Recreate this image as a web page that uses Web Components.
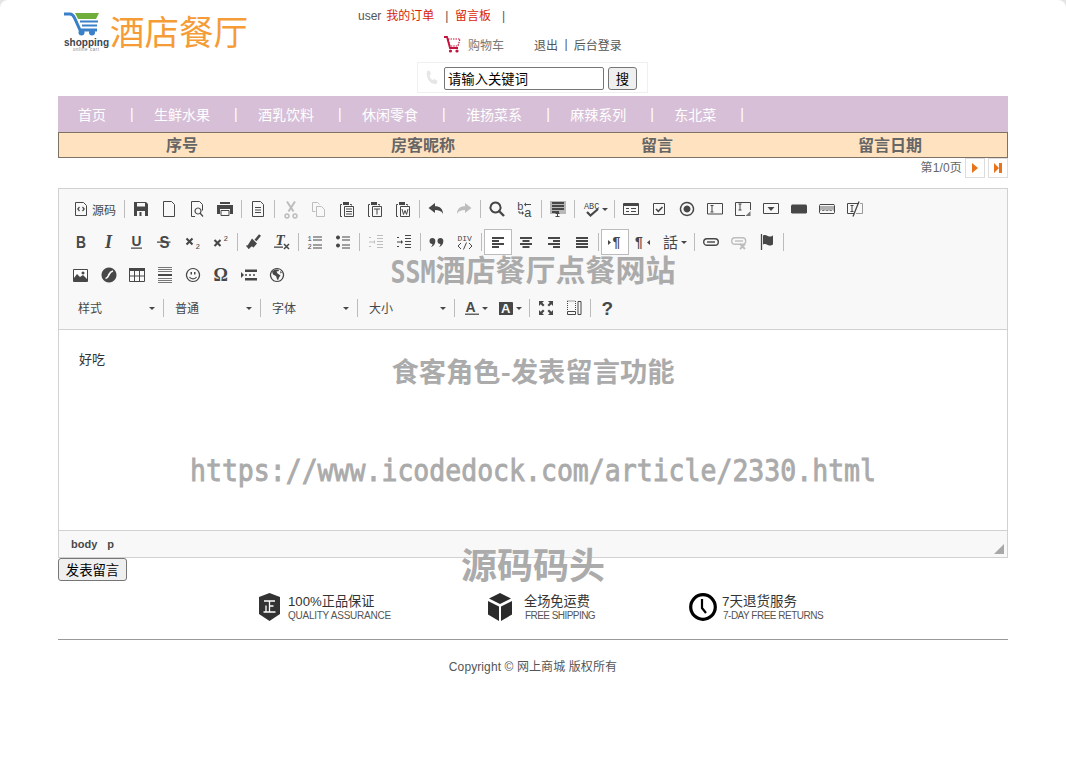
<!DOCTYPE html>
<html lang="zh">
<head>
<meta charset="utf-8">
<title>酒店餐厅</title>
<style>
    html { background: #e4e4e4; }
    body {
        margin: 0;
        height: 778px;
        overflow: hidden;
        position: relative;
        background: white;
        border-radius: 8px 8px 0 0;
        font-family: "Liberation Sans", "Noto Sans CJK SC", sans-serif;
    }
</style>
</head>
<body>
<hotel-page>
    <site-header>
        <a slot="account" class="name">user</a>
        <a slot="account" class="red">我的订单</a>
        <a slot="account" class="bar">|</a>
        <a slot="account" class="red">留言板</a>
        <a slot="account" class="bar">|</a>
    </site-header>
    <nav-bar>
        <a>首页</a><a>生鲜水果</a><a>酒乳饮料</a><a>休闲零食</a><a>淮扬菜系</a><a>麻辣系列</a><a>东北菜</a>
    </nav-bar>
    <table-head>
        <span>序号</span><span>房客昵称</span><span>留言</span><span>留言日期</span>
    </table-head>
    <page-info>第1/0页</page-info>
    <rich-editor>好吃</rich-editor>
    <submit-bar>发表留言</submit-bar>
    <site-footer>
        <trust-badge icon="shield" gap="8" width="229">100%正品保证<span slot="sub" style="letter-spacing:-.25px">QUALITY ASSURANCE</span></trust-badge>
        <trust-badge icon="cube" gap="12" width="201">全场免运费<span slot="sub" style="letter-spacing:-.55px;margin-left:1px">FREE SHIPPING</span></trust-badge>
        <trust-badge icon="clock" gap="5" width="140"><span style="font-size:13.5px">7天退货服务</span><span slot="sub" style="letter-spacing:-.5px;margin-left:1px">7-DAY FREE RETURNS</span></trust-badge>
    </site-footer>
</hotel-page>
<water-mark></water-mark>

<script>
class ShadowElement extends HTMLElement {
    constructor() {
        super();
        const template = document.createElement('template');
        template.innerHTML = `<style>${this.constructor.styles}</style>${this.constructor.markup}`;
        this.attachShadow({ mode: 'open' });
        this.shadowRoot.appendChild(template.content.cloneNode(true));
    }
}

const DARK = '#474747';
const FADED = '#bdbdbd';
const SERIF = 'font-family="Liberation Serif" font-style="italic" font-weight="bold"';
const MONO = 'font-family="Liberation Mono"';
const line = (d, color = DARK, w = 1) => `<path d="${d}" fill="none" stroke="${color}" stroke-width="${w}"/>`;
const fill = (d, color = DARK) => `<path d="${d}" fill="${color}"/>`;
const glyph = (ch, x, y, size, attrs = 'font-weight="bold"', color = DARK) =>
    `<text ${attrs} x="${x}" y="${y}" font-size="${size}" font-family="Liberation Sans" fill="${color}">${ch}</text>`;
const pageOutline = line('M2.5 .5h8l3 3v12h-11z');
const clipboard = line('M3 3.5H1.5v12H3M11 3.5h1.5v1') + fill('M4 1h6v3H4z') + line('M5.5 5.5h9v10h-9z');

const ICONS = {
    source: line('M2.5 1.5h8l3 3v10h-11z') + line('M6.5 6L4.8 8l1.7 2M9.5 6l1.7 2-1.7 2', DARK, 1.2),
    save: fill('M1 1h12l2 2v12H1z') + fill('M4 2h8v3.5H4z', '#f8f8f8') + fill('M4 10h8v5H4z', '#f8f8f8') + fill('M6.5 11h2v4h-2z'),
    newpage: pageOutline,
    preview: line('M2.5 .5h8l3 3v6M6 15.5H2.5v-15') + line('M9 7a3 3 0 1 0 .01 0zM11 12l3 3.5', DARK, 1.2),
    print: fill('M3 1h10v2H3z') + fill('M0 4h16v9h-3V8H3v5H0z') + line('M4 9.5h8v5H4z'),
    templates: pageOutline + line('M5 6.5h6M5 9h6M5 11.5h6'),
    cut: line('M4 .5l6.5 10M12 .5l-6.5 10', FADED, 2) + line('M4 13a2 2 0 1 0 .01 0zM12 13a2 2 0 1 0 .01 0z', FADED, 1.6),
    copy: line('M1.5 1.5h5l2 2M1.5 1.5v9h3', FADED) + line('M5.5 5.5h5l3 3v7h-8z', FADED),
    paste: clipboard + line('M7 8h6M7 10.5h6M7 13h6'),
    pastetext: clipboard + line('M7 8h6M10 8v5.5'),
    pasteword: clipboard + line('M7 8l1.5 5.5L10 9.5l1.5 4L13 8'),
    undo: fill('M7 2v3.2c5 0 8 2.6 8 7.8-1.5-3-4-4-8-4V12L.5 7z'),
    redo: fill('M9 2v3.2C4 5.2 1 7.8 1 13c1.5-3 4-4 8-4V12l6.5-5z', FADED),
    find: line('M6.5 1.5a5 5 0 1 0 .01 0z', DARK, 2) + line('M10 10l5 5', DARK, 2.4),
    replace: glyph('b', 0, 9, 11, MONO) + glyph('a', 7, 16, 13, MONO) + line('M9 3.5h5M5 12H2v-2') + fill('M9 1.5v4l-2-2zM5 10v4l2-2z'),
    selectall: fill('M0 0h16v13H0z', '#b8b8b8') + fill('M2 1h12v2H2zM2 4h12v2H2zM2 7h12v2H2zM2 10h7v2H2z') + line('M5.5 12.5h4M7.5 12.5v3M5.5 15.5h4'),
    spell: glyph('ABC', 0, 7.5, 8.5, MONO) + line('M3 11l3.5 3.5L14 8', DARK, 2.2),
    form: line('M.5 2.5h15v11H.5z') + fill('M1 3h14v2H1z') + line('M3 7.5h3M8 7.5h5M3 10.5h3M8 10.5h5'),
    checkbox: line('M2.5 2.5h11v11h-11z') + line('M5 8l2.3 2.3L11.5 6', DARK, 1.6),
    radio: line('M8 1.5a6.5 6.5 0 1 0 .01 0z', DARK, 1.4) + fill('M8 4.5a3.5 3.5 0 1 0 .01 0z'),
    textfield: line('M.5 2.5h15V13H.5z') + line('M3.5 4.5h3M5 4.5V11M3.5 11h3'),
    textarea: line('M15.5 9V1.5H.5v13H10') + line('M3.5 3h3M5 3v6M3.5 9h3') + fill('M15.5 10v5h-5z', '#777'),
    select: line('M.5 2.5h15v10H.5z') + fill('M4.5 6h7L8 10z'),
    button: fill('M1 3.5h14l1 1v7l-1 1H1l-1-1v-7z'),
    imagebutton: line('M1 3.5h14l.5 1v7l-.5 1H1l-.5-1v-7z') + fill('M1 5h14v5c-1 0-1.5-1.5-2.5-1.5S11 10 10 10 8.8 8.5 8 8.5 6.5 10 5.5 10 4.5 8.5 3.5 8.5 2 10 1 10z', '#b0b0b0') + fill('M3 10h2L4 8.5zM7 10h2L8 8.5zM11 10h2l-1-1.5z'),
    hiddenfield: line('M12 2.5H.5v10H7M3.5 4.5h3M5 4.5v6M3.5 10.5h3') + line('M12 .5L6 15.5', DARK, 1.3) + line('M13 2.5h2.5v10H9', '#999', 1),
    bold: glyph('B', 3, 13.5, 16.5, 'font-weight="bold" textLength="10" lengthAdjust="spacingAndGlyphs"'),
    italic: glyph('I', 4, 14, 18, SERIF),
    underline: glyph('U', 2.5, 11.5, 14, 'font-weight="bold" textLength="10" lengthAdjust="spacingAndGlyphs"') + fill('M2 13.5h11v1.3H2z'),
    strike: glyph('S', 2.5, 13.5, 16.5, 'font-weight="bold" textLength="10" lengthAdjust="spacingAndGlyphs"') + fill('M0 7.5h13.5v1.3H0z'),
    subscript: line('M1.5 4.5l6 6M7.5 4.5l-6 6', DARK, 2.1) + glyph('2', 10.5, 14.5, 7.5, MONO),
    superscript: line('M1.5 6l6 6M7.5 6l-6 6', DARK, 2.1) + glyph('2', 10.5, 6.5, 7.5, MONO),
    brush: line('M9.5 6.5L14 1', DARK, 2.6) + fill('M6 4.5l5 5-3.5 4c-1.5-.5-1-1.5-2.5-.5-1 .7-1.5 2-2.5 2-.7-1.5-2.5-2.5-2.5-3.5 1.5 0 2-.5 2.5-1.5z'),
    removeformat: glyph('T', 1.5, 11, 15, SERIF) + fill('M0 12.5h9v1.3H0z') + line('M10 10l5 5M15 10l-5 5', DARK, 1.5),
    numberedlist: glyph('1', .5, 6.5, 7, MONO) + glyph('2', .5, 14.5, 7, MONO) + line('M6 3h9M6 6h9M6 11h9M6 14h9', DARK, 1.1),
    bulletedlist: fill('M3 1.5a2 2 0 1 0 .01 0zM3 9.5a2 2 0 1 0 .01 0z') + line('M7 3h8M7 6h8M7 11h8M7 14h8', DARK, 1.1),
    outdent: line('M9 1.5h6M9 4.5h6M9 7.5h6M9 10.5h6M9 13.5h6M1 8h4', FADED) + fill('M5 8l2-2v4zM1 3h2v1H1zM1 12h2v1H1z', FADED),
    indent: line('M9 1.5h6M9 4.5h6M9 7.5h6M9 10.5h6M9 13.5h6M1 8h4') + fill('M7 8L5 6v4zM1 3h2v1H1zM1 12h2v1H1z'),
    blockquote: fill('M3.5 4a3 3 0 0 1 2.8 3.5c0 2.5-1.8 5-4.3 5.5 1-1 1.5-2 1.5-3A3 3 0 0 1 3.5 4zM11.5 4a3 3 0 0 1 2.8 3.5c0 2.5-1.8 5-4.3 5.5 1-1 1.5-2 1.5-3A3 3 0 0 1 11.5 4z'),
    creatediv: glyph('DIV', .5, 7, 8, MONO) + line('M4 9l-3 3 3 3M12 9l3 3-3 3M9.5 8.5l-3 7'),
    alignleft: fill('M2 3h12v2H2zM2 6h7v2H2zM2 9h12v2H2zM2 12h7v2H2z'),
    aligncenter: fill('M2 3h12v2H2zM4.5 6h7v2h-7zM2 9h12v2H2zM4.5 12h7v2h-7z'),
    alignright: fill('M2 3h12v2H2zM7 6h7v2H7zM2 9h12v2H2zM7 12h7v2H7z'),
    justify: fill('M2 3h12v2H2zM2 6h12v2H2zM2 9h12v2H2zM2 12h12v2H2z'),
    ltr: fill('M1 6l3 2.5L1 11z') + glyph('¶', 5.5, 13, 14),
    rtl: glyph('¶', 0, 13, 14) + fill('M15 6l-3 2.5 3 2.5z'),
    language: glyph('話', 0, 14, 15, 'font-family="Noto Sans CJK TC"'),
    link: `<rect x=".7" y="4.7" width="14.6" height="6.6" rx="3.3" fill="none" stroke="${DARK}" stroke-width="1.4"/>` + line('M4 8h8', DARK, 1.4),
    unlink: `<rect x=".7" y="3.7" width="14" height="6.6" rx="3.3" fill="none" stroke="${FADED}" stroke-width="1.4"/>` + line('M4 7h8', FADED, 1.4) + line('M9 10l5 5M14 10l-5 5', FADED, 1.8),
    anchor: line('M2.5 0v16', DARK, 1.3) + fill('M4 1.5c3.5-1.5 4 1 6.5 1 2 0 2.5-.5 3.5-1v9c-1 .5-1.5 1-3.5 1-2.5 0-3-2.5-6.5-1z'),
    image: line('M.5 2.5h14v12H.5z') + fill('M1 3h13v11H1z', '#fff') + fill('M1 14v-3l3-4 3 3 3-2 4 4v2z') + fill('M10 4.5a1.5 1.5 0 1 0 .01 0z'),
    flash: fill('M8 .5a7.5 7.5 0 1 0 .01 0z') + line('M4.5 11.5c2.5-.5 2.5-2 3.5-4s2-3 4-3.5', '#f8f8f8', 1.7),
    table: fill('M0 1h16v3H0z') + line('M.5 1.5h15v13H.5zM5.5 4v10.5M10.5 4v10.5M.5 9h15'),
    horizontalrule: line('M1 .5h14M1 2.5h14M1 4.5h14M1 11.5h14M1 13.5h14M1 15.5h14', '#777') + fill('M1 7h14v2H1z'),
    smiley: line('M8 1.5a6.5 6.5 0 1 0 .01 0z', DARK, 1.2) + fill('M5.5 5H7v2.5H5.5zM9 5h1.5v2.5H9z') + line('M4.5 10c1.5 2.5 5.5 2.5 7 0', DARK, 1.2),
    specialchar: glyph('Ω', .5, 14, 18, 'font-family="Liberation Serif" font-weight="bold"'),
    pagebreak: fill('M0 5l3 3-3 3z') + fill('M4 2.5h12V5H4zM4 11h12v2.5H4z') + line('M4 8h2M8 8h2M12 8h2', DARK, 1.3),
    iframe: line('M8 1.5a6.5 6.5 0 1 0 .01 0z', DARK, 1.2) + fill('M6 2.5L3 4.5l1 3 3 1.5 1 3 1 1.5 1-3 1.5-2-3-2-1-2 2.5-.5-.5-1.5zM11 4l2 1.5-1.5 1z'),
    textcolor: glyph('A', 1.5, 11.5, 14, 'font-weight="bold"') + fill('M1 13.5h14V15H1z', '#666'),
    bgcolor: fill('M1 2h13a1 1 0 0 1 1 1v11a1 1 0 0 1-1 1H1z') + glyph('A', 3, 13, 13, 'font-weight="bold"', '#f8f8f8'),
    maximize: fill('M1 1h5L4.3 2.7 6.5 5 5 6.5 2.7 4.3 1 6zM15 1v5l-1.7-1.7L11 6.5 9.5 5l2.2-2.3L10 1zM1 15v-5l1.7 1.7L5 9.5 6.5 11l-2.2 2.3L6 15zM15 15h-5l1.7-1.7L9.5 11 11 9.5l2.3 2.2L15 10z'),
    showblocks: `<path d="M1.5 1h8M1.5 1v9M9.5 1v9" fill="none" stroke="${DARK}" stroke-dasharray="1 1"/>` + line('M1.5 11.5h8v3h-8zM12 1.5h3v13h-3z'),
    about: glyph('?', 2.5, 14.5, 19),
};

class HotelPage extends ShadowElement {
    static get styles() {
        return `
            :host { display: block; width: 950px; margin-left: 58px; }
        `;
    }

    static get markup() {
        return `<slot></slot>`;
    }
}

class SiteHeader extends ShadowElement {
    static get styles() {
        return `
            :host { display: grid; grid-template-columns: 300px 1fr; height: 96px; font-size: 12px; color: #555; }
            .brand { display: flex; align-items: flex-start; padding: 12px 0 0 5px; }
            .brand svg { width: 46px; height: 40px; overflow: visible; }
            .title { margin: -1px 0 0 1px; font-size: 34.5px; line-height: 44px; color: #f59c36; white-space: nowrap; }
            .links { display: flex; flex-direction: column; }
            .account { display: flex; height: 16px; margin-top: 8px; line-height: 16px; }
            ::slotted(.name) { margin-right: 5px; }
            ::slotted(.red) { color: #d81e06; }
            ::slotted(.bar) { margin: 0 6.5px 0 11px; color: #555; }
            .cart { display: flex; align-items: center; height: 20px; margin: 10px 0 8px 85px; }
            .cart svg { width: 18px; height: 18px; margin-right: 7px; }
            .cart .label { width: 66px; color: #777; }
            .cart .bar { margin: 0 6px 0 6.5px; }
            .search { display: flex; align-items: flex-start; box-sizing: border-box; width: 231px; height: 31px; margin-left: 59px; padding: 4px 10px 0 7px; border: 1px solid #f0f0f0; }
            .search svg { width: 13px; height: 15px; margin: 3px 6px 0 0; }
            input { box-sizing: border-box; width: 160px; height: 23px; padding: 1px 3px; border: 1px solid #767676; border-radius: 2px; font: 13.333px "Liberation Sans", "Noto Sans CJK SC", sans-serif; color: #000; background: #fff; }
            button { box-sizing: border-box; width: 29px; height: 23px; margin-left: 4px; padding: 0; border: 1px solid #767676; border-radius: 3px; background: #efefef; font: 13.333px "Liberation Sans", "Noto Sans CJK SC", sans-serif; color: #000; }
        `;
    }

    static get markup() {
        return `
            <div class="brand">
                <svg viewBox="0 0 46 40">
                    <path d="M1 2h6c3 0 4 3 5 5l5 11h17" fill="none" stroke="#3a80c9" stroke-width="3"/>
                    <path d="M12 1h24l-3 6H15z" fill="#6fae3c"/>
                    <path d="M17 8.5h18v2H17zM19 12.5h15v2H19z" fill="#3a80c9"/>
                    <circle cx="18.5" cy="20.5" r="3" fill="#3a80c9"/>
                    <circle cx="29" cy="20.5" r="3" fill="#3a80c9"/>
                    <text x="1" y="33.5" font-size="11" font-weight="bold" font-family="Liberation Sans" fill="#3d4450" textLength="45" lengthAdjust="spacingAndGlyphs">shopping</text>
                    <text x="10" y="39" font-size="4.5" font-family="Liberation Sans" fill="#888" textLength="26">online cart</text>
                </svg>
                <div class="title">酒店餐厅</div>
            </div>
            <div class="links">
                <div class="account"><slot name="account"></slot></div>
                <div class="cart">
                    <svg viewBox="0 0 18 18">
                        <path d="M1 2h3l3 11h8" fill="none" stroke="#c4133c" stroke-width="1.8"/>
                        <path d="M5 4h12l-2 7H7z" fill="none" stroke="#c4133c" stroke-width="1.2" stroke-dasharray="1.5 1"/>
                        <circle cx="7.5" cy="16" r="1.6" fill="#c4133c"/>
                        <circle cx="14" cy="16" r="1.6" fill="#c4133c"/>
                    </svg>
                    <span class="label">购物车</span>
                    <span>退出</span><span class="bar">|</span><span>后台登录</span>
                </div>
                <div class="search">
                    <svg viewBox="0 0 13 15"><path d="M2 1l2.5-.5L6 4 4.5 5.5c.5 2 1.5 3.5 3 4.5L9.5 9l3 2-1 3c-6 1-11-6-9.5-13z" fill="#e6e6e6"/></svg>
                    <input value="请输入关键词">
                    <button>搜</button>
                </div>
            </div>
        `;
    }
}

class NavBar extends ShadowElement {
    static get styles() {
        return `
            :host { display: flex; align-items: center; height: 36px; padding-left: 20px; background: #d7bfd7; font-size: 14px; color: #fff; }
            ::slotted(a) { display: flex; align-items: center; white-space: nowrap; }
            ::slotted(a)::after { content: "|"; margin: 0 20.4px 0 24px; }
        `;
    }

    static get markup() {
        return `<slot></slot>`;
    }
}

class TableHead extends ShadowElement {
    static get styles() {
        return `
            :host { display: grid; grid-template-columns: 246px 236px 232px 234px; box-sizing: border-box; height: 26px; border: 1px solid #7d7263; background: #ffe2c0; font-size: 16px; font-weight: bold; line-height: 26px; color: #666; text-align: center; }
        `;
    }

    static get markup() {
        return `<slot></slot>`;
    }
}

class PageInfo extends ShadowElement {
    static get styles() {
        return `
            :host { display: flex; justify-content: flex-end; height: 20px; margin-bottom: 10px; font-size: 12px; letter-spacing: .15px; line-height: 20px; color: #666; }
            .step { display: flex; align-items: center; justify-content: center; box-sizing: border-box; width: 20px; height: 20px; margin-left: 3px; border: 1px solid #ddd; }
            svg { width: 8px; height: 10px; fill: #e8731a; }
        `;
    }

    static get markup() {
        return `
            <slot></slot>
            <span class="step"><svg viewBox="0 0 8 10"><path d="M1 0l6 5-6 5z"/></svg></span>
            <span class="step"><svg viewBox="0 0 8 10"><path d="M0 0l5 5-5 5zM5 0h3v10H5z"/></svg></span>
        `;
    }
}

class EditorButton extends ShadowElement {
    static get styles() {
        return `
            :host { display: flex; align-items: center; box-sizing: border-box; width: 28px; height: 26px; padding-left: 6px; font-size: 12px; color: #474747; flex: none; }
            :host([active]) { padding-left: 5px; border: 1px solid #bcbcbc; background: #fff; }
            svg { width: 16px; height: 16px; flex: none; overflow: visible; }
            .caret { width: 0; height: 0; margin-left: 2px; border: 3px solid transparent; border-top-color: #474747; border-bottom: 0; }
            .label { margin-left: 3px; white-space: nowrap; }
        `;
    }

    static get markup() {
        return `<svg viewBox="0 0 16 16"></svg><span class="label"><slot></slot></span>`;
    }

    static get observedAttributes() {
        return ['icon', 'caret'];
    }

    attributeChangedCallback(name, oldValue, newValue) {
        if (name === 'icon') {
            this.shadowRoot.querySelector('svg').innerHTML = ICONS[newValue];
        }
        if (name === 'caret') {
            const caret = document.createElement('span');
            caret.className = 'caret';
            this.shadowRoot.insertBefore(caret, this.shadowRoot.querySelector('.label'));
        }
    }
}

class EditorCombo extends ShadowElement {
    static get styles() {
        return `
            :host { display: flex; align-items: center; justify-content: space-between; box-sizing: border-box; width: 92px; height: 26px; padding: 0 6px 2px 9px; font-size: 12px; color: #474747; flex: none; }
            .caret { width: 0; height: 0; margin-top: 2px; border: 3px solid transparent; border-top-color: #474747; border-bottom: 0; }
        `;
    }

    static get markup() {
        return `<slot></slot><span class="caret"></span>`;
    }
}

const TOOLBAR = [
    ['source', '|', 'save', 'newpage', 'preview', 'print', '|', 'templates', '|', 'cut', 'copy', 'paste', 'pastetext', 'pasteword', '|', 'undo', 'redo', '|', 'find', 'replace', '|', 'selectall', '|', 'spell:35:7', '|', 'form', 'checkbox', 'radio', 'textfield', 'textarea', 'select', 'button', 'imagebutton', 'hiddenfield'],
    ['bold', 'italic', 'underline', 'strike', 'subscript', 'superscript', '|', 'brush', 'removeformat', '|', 'numberedlist', 'bulletedlist', '|', 'outdent', 'indent', '|', 'blockquote', 'creatediv', '|', 'alignleft*', 'aligncenter', 'alignright', 'justify', '|', 'ltr*', 'rtl', 'language:35:6', '|', 'link', 'unlink', 'anchor', '|'],
    ['image', 'flash', 'table', 'horizontalrule', 'smiley', 'specialchar', 'pagebreak', 'iframe'],
    ['#样式', '|', '#普通', '|', '#字体', '|', '#大小', '|', 'textcolor:34:7', 'bgcolor:31:2', '|', 'maximize', 'showblocks', '|', 'about'],
];

class RichEditor extends ShadowElement {
    static get styles() {
        return `
            :host { display: block; box-sizing: border-box; height: 370px; border: 1px solid #d1d1d1; font-size: 13px; color: #333; }
            .toolbar { box-sizing: border-box; height: 140px; padding: 7px 0 8px 8px; display: flex; flex-direction: column; gap: 7px; background: #f8f8f8; }
            .row { display: flex; align-items: center; height: 26px; }
            .row.combos { margin-left: 2px; }
            .sep { flex: none; width: 1px; height: 18px; margin: 0 2px; background: #bcbcbc; }
            .content { box-sizing: border-box; height: 202px; padding: 21px 20px 0; border-top: 1px solid #d1d1d1; border-bottom: 1px solid #d1d1d1; background: #fff; line-height: 18px; }
            .path { display: flex; align-items: center; gap: 10px; position: relative; height: 26px; padding-left: 12px; background: #f8f8f8; font-size: 11px; font-weight: bold; color: #484848; }
            .grip { position: absolute; right: 3px; bottom: 3px; width: 10px; height: 10px; }
        `;
    }

    static get markup() {
        return `
            <div class="toolbar"></div>
            <div class="content"><slot></slot></div>
            <div class="path">
                <span>body</span><span>p</span>
                <svg class="grip" viewBox="0 0 10 10"><path d="M10 0v10H0z" fill="#a8a8a8"/></svg>
            </div>
        `;
    }

    connectedCallback() {
        const toolbar = this.shadowRoot.querySelector('.toolbar');
        TOOLBAR.forEach((items, index) => {
            const row = document.createElement('div');
            row.className = index === 3 ? 'row combos' : 'row';
            items.forEach(item => row.appendChild(this.renderItem(item)));
            toolbar.appendChild(row);
        });
    }

    renderItem(item) {
        if (item === '|') {
            const sep = document.createElement('span');
            sep.className = 'sep';
            return sep;
        }
        if (item[0] === '#') {
            const combo = document.createElement('editor-combo');
            combo.textContent = item.slice(1);
            return combo;
        }
        const [name, width, pad] = item.replace('*', '').split(':');
        const button = document.createElement('editor-button');
        button.setAttribute('icon', name);
        if (item.endsWith('*')) button.setAttribute('active', '');
        if (width) {
            button.setAttribute('caret', '');
            button.style.width = `${width}px`;
            button.style.paddingLeft = `${pad}px`;
        }
        if (name === 'textcolor') button.style.marginRight = '5px';
        if (name === 'source') {
            button.style.width = '55px';
            button.textContent = '源码';
        }
        return button;
    }
}

class SubmitBar extends ShadowElement {
    static get styles() {
        return `
            :host { display: block; height: 23px; }
            button { box-sizing: border-box; width: 69px; height: 23px; padding: 0; border: 1px solid #767676; border-radius: 3px; background: #efefef; font: 13.333px "Liberation Sans", "Noto Sans CJK SC", sans-serif; color: #000; }
        `;
    }

    static get markup() {
        return `<button><slot></slot></button>`;
    }
}

const BADGES = {
    shield: `<svg width="21" height="28" viewBox="0 0 21 28"><path d="M10.5 0L21 4v17l-10.5 7L0 21V4z" fill="#333"/><path d="M5 8h11M10.5 8v11M7 12.5V19M10.5 13h4M4.5 19h12" fill="none" stroke="#fff" stroke-width="1.3"/></svg>`,
    cube: `<svg width="24" height="28" viewBox="0 0 24 28"><path d="M12 0l11 5.5L12 11 1 5.5zM0 8l11 5.5V28L0 21.5zM24 8l-11 5.5V28l11-6.5z" fill="#2b2b2b"/></svg>`,
    clock: `<svg width="28" height="28" viewBox="0 0 28 28"><circle cx="14" cy="14" r="12.3" fill="none" stroke="#000" stroke-width="3.2"/><path d="M13 6v9l4 5" fill="none" stroke="#000" stroke-width="2.2"/></svg>`,
};

class TrustBadge extends ShadowElement {
    static get styles() {
        return `
            :host { display: flex; align-items: center; flex: none; box-sizing: border-box; height: 28px; }
            .icon { display: flex; flex: none; }
            .text { display: flex; flex-direction: column; padding-top: 2px; white-space: nowrap; }
            .main { height: 15px; font-size: 13.2px; line-height: 15px; color: #333; }
            .sub { height: 13px; font-size: 10px; line-height: 13px; color: #555; }
        `;
    }

    static get markup() {
        return `
            <div class="icon"></div>
            <div class="text">
                <div class="main"><slot></slot></div>
                <div class="sub"><slot name="sub"></slot></div>
            </div>
        `;
    }

    connectedCallback() {
        const icon = this.shadowRoot.querySelector('.icon');
        icon.innerHTML = BADGES[this.getAttribute('icon')];
        icon.style.marginRight = `${this.getAttribute('gap')}px`;
        this.style.width = `${this.getAttribute('width')}px`;
    }
}

class SiteFooter extends ShadowElement {
    static get styles() {
        return `
            :host { display: block; }
            .badges { display: flex; height: 28px; padding: 12px 0 0 201px; }
            hr { height: 1px; margin: 18px 0 0; border: 0; background: #999; }
            p { margin: 19px 0 0; font-size: 12px; letter-spacing: .1px; line-height: 16px; color: #555; text-align: center; }
        `;
    }

    static get markup() {
        return `
            <div class="badges"><slot></slot></div>
            <hr>
            <p>Copyright © 网上商城 版权所有</p>
        `;
    }
}

class WaterMark extends ShadowElement {
    static get styles() {
        return `
            :host { position: absolute; inset: 0; pointer-events: none; font-weight: bold; color: #ababab; font-family: "Noto Sans CJK SC", sans-serif; }
            div { position: absolute; left: 0; right: 0; text-align: center; white-space: nowrap; }
            .mono { display: inline-block; transform: scaleY(1.25); font-family: "DejaVu Sans Mono", monospace; }
            .one { top: 248px; font-size: 30px; line-height: 40px; }
            .one .mono { font-size: 25px; }
            .two { top: 350px; font-size: 27.3px; line-height: 40px; }
            .three { top: 449px; font-size: 26.5px; line-height: 40px; }
            .three .mono { font-weight: normal; -webkit-text-stroke: .8px #ababab; transform: scaleY(1.15); }
            .four { top: 543px; font-size: 36px; line-height: 40px; }
        `;
    }

    static get markup() {
        return `
            <div class="one"><span class="mono">SSM</span>酒店餐厅点餐网站</div>
            <div class="two">食客角色-发表留言功能</div>
            <div class="three"><span class="mono">https://www.icodedock.com/article/2330.html</span></div>
            <div class="four">源码码头</div>
        `;
    }
}

customElements.define('hotel-page', HotelPage);
customElements.define('site-header', SiteHeader);
customElements.define('nav-bar', NavBar);
customElements.define('table-head', TableHead);
customElements.define('page-info', PageInfo);
customElements.define('editor-button', EditorButton);
customElements.define('editor-combo', EditorCombo);
customElements.define('rich-editor', RichEditor);
customElements.define('submit-bar', SubmitBar);
customElements.define('trust-badge', TrustBadge);
customElements.define('site-footer', SiteFooter);
customElements.define('water-mark', WaterMark);
</script>
</body>
</html>
